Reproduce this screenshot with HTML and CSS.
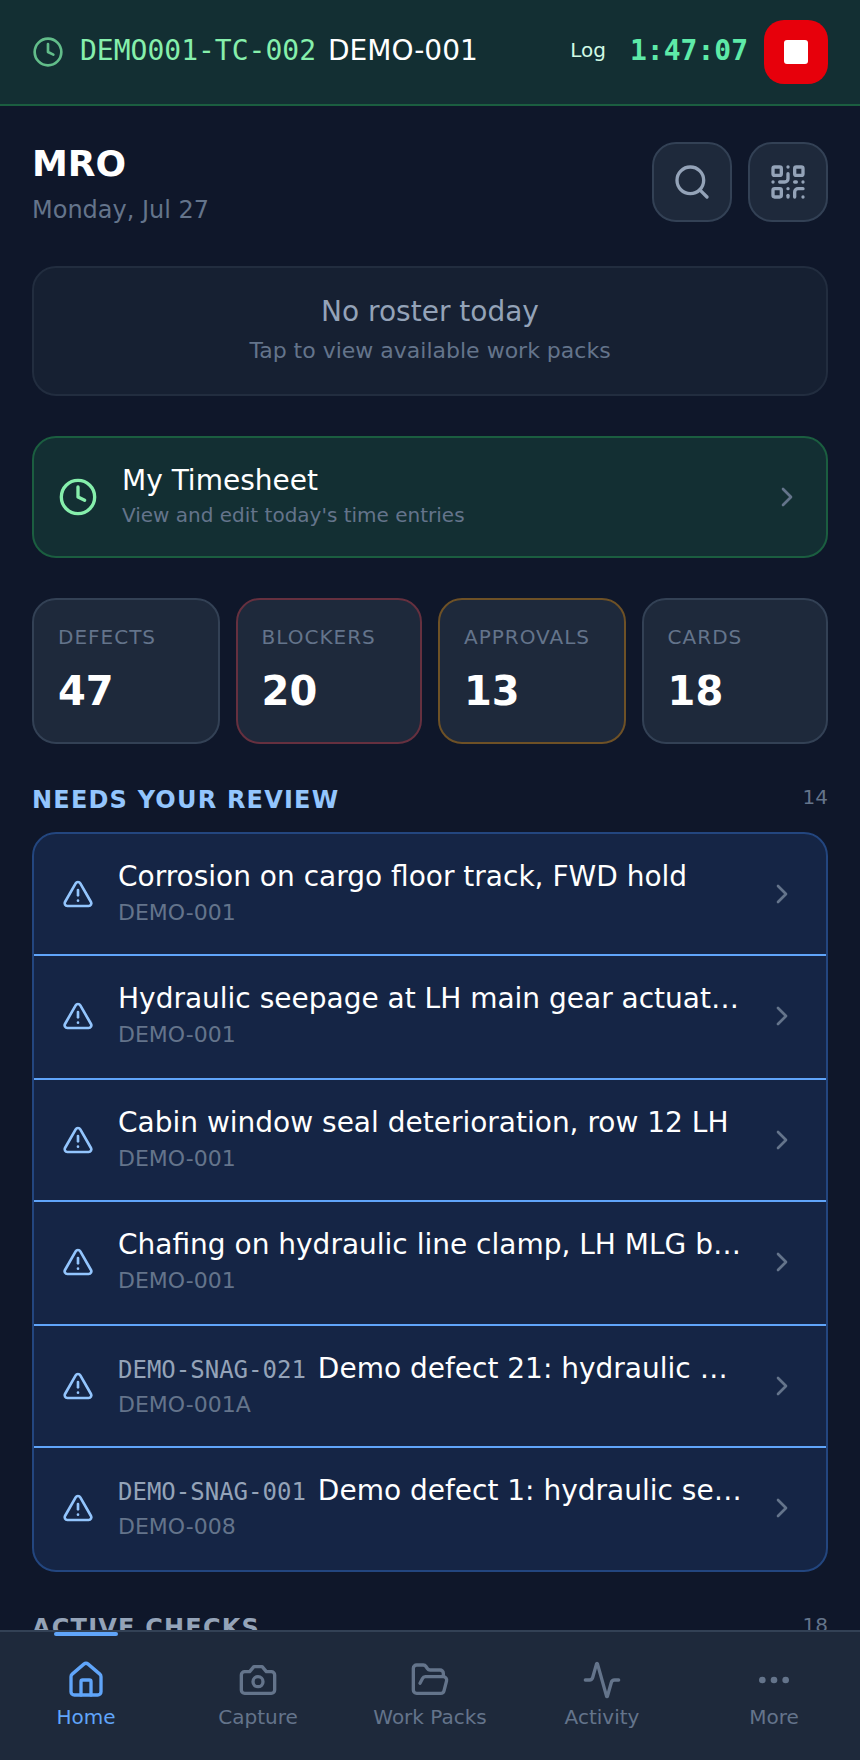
FILE: index.html
```html
<!DOCTYPE html>
<html lang="en">
<head>
<meta charset="utf-8">
<title>MRO</title>
<link rel="stylesheet" href="styles.css">
</head>
<body>
<div class="app">
  <header class="timer-bar">
    <svg class="timer-clock" viewBox="0 0 24 24"><circle cx="12" cy="12" r="10"/><path d="M12 6v6l4 2"/></svg>
    <span class="timer-task">DEMO001-TC-002</span>
    <span class="timer-ac">DEMO-001</span>
    <span class="timer-log">Log</span>
    <span class="timer-time">1:47:07</span>
    <button class="stop-btn"><span class="stop-square"></span></button>
  </header>

  <main class="content">
    <section class="top-row">
      <div>
        <h1 class="org">MRO</h1>
        <div class="date">Monday, Jul 27</div>
      </div>
      <div class="top-actions">
        <button class="square-btn">
          <svg class="icon-36" viewBox="0 0 24 24"><circle cx="11" cy="11" r="8"/><path d="m21 21-4.3-4.3"/></svg>
        </button>
        <button class="square-btn">
          <svg class="icon-36" viewBox="0 0 24 24"><rect x="3" y="3" width="5" height="5" rx="1"/><rect x="16" y="3" width="5" height="5" rx="1"/><rect x="3" y="16" width="5" height="5" rx="1"/><path d="M21 16h-3a2 2 0 0 0-2 2v3"/><path d="M21 21v.01"/><path d="M12 7v3a2 2 0 0 1-2 2H7"/><path d="M3 12h.01"/><path d="M12 3h.01"/><path d="M12 16v.01"/><path d="M16 12h1"/><path d="M21 12v.01"/><path d="M12 21v-1"/></svg>
        </button>
      </div>
    </section>

    <section class="roster">
      <div class="roster-title">No roster today</div>
      <div class="roster-sub">Tap to view available work packs</div>
    </section>

    <section class="timesheet">
      <svg class="timesheet-clock" viewBox="0 0 24 24"><circle cx="12" cy="12" r="10"/><path d="M12 6v6l4 2"/></svg>
      <div class="timesheet-text">
        <div class="timesheet-title">My Timesheet</div>
        <div class="timesheet-sub">View and edit today's time entries</div>
      </div>
      <svg class="chevron" viewBox="0 0 24 24"><path d="m9 18 6-6-6-6"/></svg>
    </section>

    <section class="stats">
      <div class="stat"><div class="stat-label">DEFECTS</div><div class="stat-value">47</div></div>
      <div class="stat stat-red"><div class="stat-label">BLOCKERS</div><div class="stat-value">20</div></div>
      <div class="stat stat-amber"><div class="stat-label">APPROVALS</div><div class="stat-value">13</div></div>
      <div class="stat"><div class="stat-label">CARDS</div><div class="stat-value">18</div></div>
    </section>

    <section>
      <div class="section-head">
        <h2 class="section-title section-title-blue">NEEDS YOUR REVIEW</h2>
        <span class="section-count">14</span>
      </div>
      <div class="review-list">
        <div class="review-row">
          <svg class="warn" viewBox="0 0 24 24"><path d="m21.73 18-8-14a2 2 0 0 0-3.48 0l-8 14A2 2 0 0 0 4 21h16a2 2 0 0 0 1.73-3"/><path d="M12 9v4"/><path d="M12 17h.01"/></svg>
          <div class="review-text">
            <div class="review-title">Corrosion on cargo floor track, FWD hold</div>
            <div class="review-sub">DEMO-001</div>
          </div>
          <svg class="chevron" viewBox="0 0 24 24"><path d="m9 18 6-6-6-6"/></svg>
        </div>
        <div class="review-row">
          <svg class="warn" viewBox="0 0 24 24"><path d="m21.73 18-8-14a2 2 0 0 0-3.48 0l-8 14A2 2 0 0 0 4 21h16a2 2 0 0 0 1.73-3"/><path d="M12 9v4"/><path d="M12 17h.01"/></svg>
          <div class="review-text">
            <div class="review-title">Hydraulic seepage at LH main gear actuator housing</div>
            <div class="review-sub">DEMO-001</div>
          </div>
          <svg class="chevron" viewBox="0 0 24 24"><path d="m9 18 6-6-6-6"/></svg>
        </div>
        <div class="review-row">
          <svg class="warn" viewBox="0 0 24 24"><path d="m21.73 18-8-14a2 2 0 0 0-3.48 0l-8 14A2 2 0 0 0 4 21h16a2 2 0 0 0 1.73-3"/><path d="M12 9v4"/><path d="M12 17h.01"/></svg>
          <div class="review-text">
            <div class="review-title">Cabin window seal deterioration, row 12 LH</div>
            <div class="review-sub">DEMO-001</div>
          </div>
          <svg class="chevron" viewBox="0 0 24 24"><path d="m9 18 6-6-6-6"/></svg>
        </div>
        <div class="review-row">
          <svg class="warn" viewBox="0 0 24 24"><path d="m21.73 18-8-14a2 2 0 0 0-3.48 0l-8 14A2 2 0 0 0 4 21h16a2 2 0 0 0 1.73-3"/><path d="M12 9v4"/><path d="M12 17h.01"/></svg>
          <div class="review-text">
            <div class="review-title">Chafing on hydraulic line clamp, LH MLG bay forward</div>
            <div class="review-sub">DEMO-001</div>
          </div>
          <svg class="chevron" viewBox="0 0 24 24"><path d="m9 18 6-6-6-6"/></svg>
        </div>
        <div class="review-row">
          <svg class="warn" viewBox="0 0 24 24"><path d="m21.73 18-8-14a2 2 0 0 0-3.48 0l-8 14A2 2 0 0 0 4 21h16a2 2 0 0 0 1.73-3"/><path d="M12 9v4"/><path d="M12 17h.01"/></svg>
          <div class="review-text">
            <div class="review-title"><span class="snag">DEMO-SNAG-021</span>Demo defect 21: hydraulic seepage</div>
            <div class="review-sub">DEMO-001A</div>
          </div>
          <svg class="chevron" viewBox="0 0 24 24"><path d="m9 18 6-6-6-6"/></svg>
        </div>
        <div class="review-row">
          <svg class="warn" viewBox="0 0 24 24"><path d="m21.73 18-8-14a2 2 0 0 0-3.48 0l-8 14A2 2 0 0 0 4 21h16a2 2 0 0 0 1.73-3"/><path d="M12 9v4"/><path d="M12 17h.01"/></svg>
          <div class="review-text">
            <div class="review-title"><span class="snag">DEMO-SNAG-001</span>Demo defect 1: hydraulic seepage</div>
            <div class="review-sub">DEMO-008</div>
          </div>
          <svg class="chevron" viewBox="0 0 24 24"><path d="m9 18 6-6-6-6"/></svg>
        </div>
      </div>
    </section>

    <section class="active-checks">
      <div class="section-head">
        <h2 class="section-title">ACTIVE CHECKS</h2>
        <span class="section-count">18</span>
      </div>
    </section>
  </main>

  <nav class="tabbar">
    <a class="tab tab-active">
      <span class="tab-marker"></span>
      <svg viewBox="0 0 24 24"><path d="M15 21v-8a1 1 0 0 0-1-1h-4a1 1 0 0 0-1 1v8"/><path d="M3 10a2 2 0 0 1 .709-1.528l7-5.999a2 2 0 0 1 2.582 0l7 5.999A2 2 0 0 1 21 10v9a2 2 0 0 1-2 2H5a2 2 0 0 1-2-2z"/></svg>
      <span>Home</span>
    </a>
    <a class="tab">
      <svg viewBox="0 0 24 24"><path d="M14.5 4h-5L7 7H4a2 2 0 0 0-2 2v9a2 2 0 0 0 2 2h16a2 2 0 0 0 2-2V9a2 2 0 0 0-2-2h-3z"/><circle cx="12" cy="13" r="3"/></svg>
      <span>Capture</span>
    </a>
    <a class="tab">
      <svg viewBox="0 0 24 24"><path d="m6 14 1.5-2.9A2 2 0 0 1 9.24 10H20a2 2 0 0 1 1.94 2.5l-1.54 6a2 2 0 0 1-1.95 1.5H4a2 2 0 0 1-2-2V5a2 2 0 0 1 2-2h3.9a2 2 0 0 1 1.69.9l.81 1.2a2 2 0 0 0 1.67.9H18a2 2 0 0 1 2 2v2"/></svg>
      <span>Work Packs</span>
    </a>
    <a class="tab">
      <svg viewBox="0 0 24 24"><path d="M22 12h-2.48a2 2 0 0 0-1.93 1.46l-2.35 8.36a.25.25 0 0 1-.48 0L9.24 2.18a.25.25 0 0 0-.48 0l-2.35 8.36A2 2 0 0 1 4.49 12H2"/></svg>
      <span>Activity</span>
    </a>
    <a class="tab">
      <svg viewBox="0 0 24 24"><circle cx="12" cy="12" r="1"/><circle cx="19" cy="12" r="1"/><circle cx="5" cy="12" r="1"/></svg>
      <span>More</span>
    </a>
  </nav>
</div>
</body>
</html>
```

FILE: styles.css
```css
* { box-sizing: border-box; }

html, body { margin: 0; padding: 0; }

body {
  background: #0f172a;
  color: #fff;
  font-family: "DejaVu Sans", sans-serif;
}

.app {
  position: relative;
  width: 860px;
  height: 1760px;
  overflow: hidden;
  background: #0f172a;
}

svg {
  fill: none;
  stroke: currentColor;
  stroke-width: 2;
  stroke-linecap: round;
  stroke-linejoin: round;
  flex: none;
  display: block;
}

button { padding: 0; font: inherit; cursor: pointer; }

/* running timer strip */
.timer-bar {
  height: 106px;
  display: flex;
  align-items: center;
  padding: 0 32px;
  background: #132f33;
  border-bottom: 2px solid #1b5e40;
}

.timer-clock { width: 32px; height: 32px; color: #62bd8a; margin-right: 16px; }

.timer-task {
  font: 28px "DejaVu Sans Mono", monospace;
  color: #86efac;
  margin: 0 12px 4px 0;
}

.timer-ac { font-size: 28px; color: #fff; margin-bottom: 4px; }

.timer-log {
  margin: 0 24px 4px auto;
  font-size: 20px;
  color: #d1fae5;
}

.timer-time {
  font: bold 28px "DejaVu Sans Mono", monospace;
  color: #5eeaa8;
  margin: 0 16px 4px 0;
}

.stop-btn {
  width: 64px;
  height: 64px;
  border: 0;
  border-radius: 20px;
  background: #e7000b;
  display: flex;
  align-items: center;
  justify-content: center;
}

.stop-square { width: 24px; height: 24px; border-radius: 3px; background: #fff; }

/* scrolling page body */
.content { padding: 36px 32px 0; }

.top-row { display: flex; justify-content: space-between; align-items: flex-start; }

.org { margin: 0; font-size: 36px; line-height: 44px; font-weight: 700; }

.date { margin-top: 8px; font-size: 24px; line-height: 32px; color: #64748b; }

.top-actions { display: flex; gap: 16px; }

.square-btn {
  width: 80px;
  height: 80px;
  border-radius: 24px;
  background: #1e293b;
  border: 2px solid #334155;
  color: #94a3b8;
  display: flex;
  align-items: center;
  justify-content: center;
}

.icon-36 { width: 40px; height: 40px; }

.roster {
  margin-top: 40px;
  height: 130px;
  padding-bottom: 2px;
  border-radius: 24px;
  background: #162032;
  border: 2px solid #222d3f;
  display: flex;
  flex-direction: column;
  align-items: center;
  justify-content: center;
}

.roster-title { font-size: 28px; line-height: 36px; color: #94a3b8; }
.roster-sub { margin-top: 6px; font-size: 22px; line-height: 30px; color: #64748b; }

.timesheet {
  margin-top: 40px;
  height: 122px;
  padding: 0 23px 2px 24px;
  border-radius: 24px;
  background: #132f33;
  border: 2px solid #1b5e40;
  display: flex;
  align-items: center;
}

.timesheet-clock { width: 40px; height: 40px; color: #86efac; margin: 2px 24px 0 0; }
.timesheet-text { flex: 1; }
.timesheet-title { font-size: 28px; line-height: 36px; color: #fff; }
.timesheet-sub { margin-top: 2px; font-size: 20px; line-height: 28px; color: #64748b; }

.chevron { width: 32px; height: 32px; color: #64748b; }

.timesheet .chevron { margin-top: 2px; }

.stats {
  margin-top: 40px;
  display: grid;
  grid-template-columns: 187.6fr 186.4fr 187.6fr 186.4fr;
  gap: 16px;
}

.stat {
  height: 146px;
  padding: 23px 24px 0;
  border-radius: 24px;
  background: #1e293b;
  border: 2px solid #334155;
}

.stat-red { border-color: #66303f; }
.stat-amber { border-color: #6e5126; }

.stat-label { font-size: 20px; line-height: 28px; letter-spacing: 1px; color: #64748b; }
.stat-value { margin-top: 16px; font-size: 40px; line-height: 48px; font-weight: 700; color: #fff; }

.section-head {
  margin-top: 40px;
  display: flex;
  justify-content: space-between;
  align-items: flex-start;
}

.section-title {
  margin: 0;
  font-size: 24px;
  line-height: 32px;
  font-weight: 700;
  letter-spacing: 1.2px;
  color: #94a3b8;
}

.section-title-blue { color: #93c5fd; }

.section-count { font-size: 20px; line-height: 26px; color: #64748b; }

.review-list {
  margin-top: 16px;
  border-radius: 24px;
  background: #152545;
  border: 2px solid #23467f;
  overflow: hidden;
}

.review-row {
  height: 122px;
  padding: 0 28px;
  display: flex;
  align-items: center;
  border-bottom: 2px solid #60a5fa;
}

/* every second row carries 2px of extra space under its content */
.review-row:nth-child(even) { height: 124px; padding-bottom: 2px; }

.review-row:last-child { height: 122px; border-bottom: 0; }

.warn { width: 32px; height: 32px; color: #93c5fd; margin-right: 24px; }

.review-text { flex: 1; min-width: 0; margin-right: 24px; }

.review-title {
  font-size: 28px;
  line-height: 34px;
  color: #fff;
  white-space: nowrap;
  overflow: hidden;
  text-overflow: ellipsis;
}

.snag {
  font: 24px "DejaVu Sans Mono", monospace;
  color: #94a3b8;
  margin-right: 12px;
}

.review-sub { margin-top: 4px; font-size: 22px; line-height: 30px; color: #64748b; }

.active-checks { margin-top: 4px; }

/* bottom navigation floats above the scrolling content */
.tabbar {
  position: absolute;
  left: 0;
  right: 0;
  bottom: 0;
  height: 130px;
  display: grid;
  grid-template-columns: repeat(5, 1fr);
  background: #1e293b;
  border-top: 2px solid #334155;
}

.tab {
  position: relative;
  display: flex;
  flex-direction: column;
  align-items: center;
  padding-top: 28px;
  font-size: 20px;
  line-height: 28px;
  color: #64748b;
}

.tab svg { width: 40px; height: 40px; margin-bottom: 3px; }

.tab-active { color: #60a5fa; }

.tab-marker {
  position: absolute;
  top: 0;
  left: 54px;
  width: 64px;
  height: 4px;
  border-radius: 2px;
  background: #60a5fa;
}
```
